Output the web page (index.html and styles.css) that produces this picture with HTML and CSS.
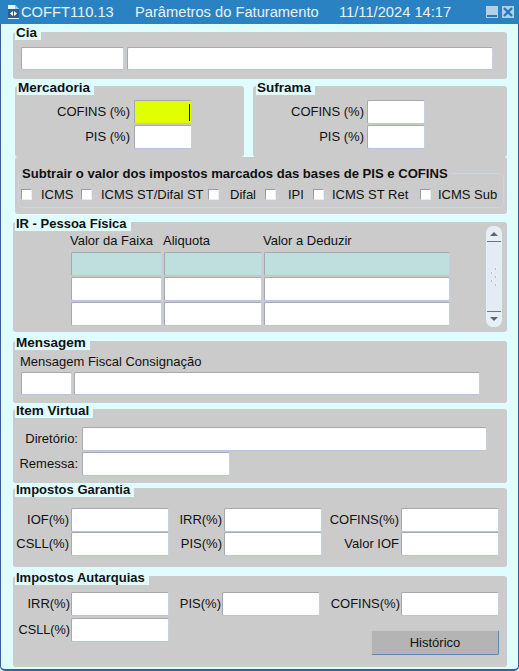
FILE: index.html
```html
<!DOCTYPE html>
<html lang="pt-BR">
<head>
  <meta charset="UTF-8" />
  <title>COFFT110.13</title>
  <link rel="stylesheet" href="styles.css">
</head>
<body>
  <div class="window">
    <!-- Title bar -->
    <div class="titlebar">
      <svg class="app-icon" width="14" height="16" viewBox="0 0 14 16">
        <path d="M2 1h7l4 4v10H2z" fill="#e8f2fa"/>
        <path d="M9 1v4h4" fill="#9cc4e4"/>
        <rect x="2" y="5" width="11" height="9" fill="#2a5f96"/>
        <path d="M7 7v5L4 9.500zM8 7v5l3-2.500z" fill="#fff"/>
      </svg>
      <span class="title-code">COFFT110.13</span>
      <span class="title-name">Parâmetros do Faturamento</span>
      <span class="title-date">11/11/2024 14:17</span>
      <span class="win-btn"><span class="min-mark"></span></span>
      <span class="win-btn">
        <svg width="12" height="12" viewBox="0 0 12 12"><path d="M2 2l8 8M10 2l-8 8" stroke="#2b78b8" stroke-width="2.400"/></svg>
      </span>
    </div>

    <div class="content">
      <!-- Cia -->
      <section class="panel panel-cia">
        <span class="legend">Cia</span>
        <div class="row-cia">
          <input class="field" type="text">
          <input class="field" type="text">
        </div>
      </section>

      <!-- Mercadoria / Suframa -->
      <div class="split">
        <section class="panel panel-merc">
          <span class="legend">Mercadoria</span>
          <div class="form-merc">
            <label>COFINS (%)</label><div class="field field-active"></div>
            <label>PIS (%)</label><input class="field" type="text">
          </div>
        </section>
        <section class="panel panel-sufr">
          <span class="legend">Suframa</span>
          <div class="form-sufr">
            <label>COFINS (%)</label><input class="field" type="text">
            <label>PIS (%)</label><input class="field" type="text">
          </div>
        </section>
      </div>

      <!-- Checkboxes -->
      <section class="panel panel-sub">
        <div class="sub-frame">
          <strong class="sub-title">Subtrair o valor dos impostos marcados das bases de PIS e COFINS</strong>
          <div class="checks">
            <input class="check" type="checkbox"><span class="check-label c1">ICMS</span>
            <input class="check" type="checkbox"><span class="check-label c2">ICMS ST/Difal ST</span>
            <input class="check" type="checkbox"><span class="check-label c3">Difal</span>
            <input class="check" type="checkbox"><span class="check-label c4">IPI</span>
            <input class="check" type="checkbox"><span class="check-label c5">ICMS ST Ret</span>
            <input class="check" type="checkbox"><span class="check-label c6">ICMS Sub</span>
          </div>
        </div>
      </section>

      <!-- IR -->
      <section class="panel panel-ir">
        <span class="legend legend-small">IR - Pessoa Física</span>
        <div class="ir-body">
          <div class="ir-grid">
            <span>Valor da Faixa</span><span>Aliquota</span><span>Valor a Deduzir</span>
            <div class="field field-teal"></div><div class="field field-teal"></div><div class="field field-teal"></div>
            <input class="field" type="text"><input class="field" type="text"><input class="field" type="text">
            <input class="field" type="text"><input class="field" type="text"><input class="field" type="text">
          </div>
          <div class="scrollbar">
            <div class="arrow-box"><span class="arrow-up"></span></div>
            <svg class="grip" width="8" height="22" viewBox="0 0 8 22">
              <path d="M5 3h1M1 7h1M5 11h1M1 15h1M5 19h1" stroke="#8a8f98" stroke-width="1"/>
              <path d="M6 2h1M2 6h1M6 10h1M2 14h1M6 18h1" stroke="#fff" stroke-width="1"/>
            </svg>
            <div class="arrow-box arrow-box-end"><span class="arrow-down"></span></div>
          </div>
        </div>
      </section>

      <!-- Mensagem -->
      <section class="panel panel-msg">
        <span class="legend">Mensagem</span>
        <div class="msg-title">Mensagem Fiscal Consignação</div>
        <div class="row-msg">
          <input class="field" type="text">
          <input class="field" type="text">
        </div>
      </section>

      <!-- Item Virtual -->
      <section class="panel panel-item">
        <span class="legend">Item Virtual</span>
        <div class="form-item">
          <label>Diretório:</label><input class="field" type="text">
          <label>Remessa:</label><input class="field field-short" type="text">
        </div>
      </section>

      <!-- Impostos Garantia -->
      <section class="panel panel-gar">
        <span class="legend legend-small">Impostos Garantia</span>
        <div class="form-tax">
          <label>IOF(%)</label><input class="field" type="text">
          <label>IRR(%)</label><input class="field" type="text">
          <label>COFINS(%)</label><input class="field" type="text">
          <label>CSLL(%)</label><input class="field" type="text">
          <label>PIS(%)</label><input class="field" type="text">
          <label>Valor IOF</label><input class="field" type="text">
        </div>
      </section>

      <!-- Impostos Autarquias -->
      <section class="panel panel-aut">
        <span class="legend legend-small">Impostos Autarquias</span>
        <div class="form-aut">
          <label>IRR(%)</label><input class="field" type="text">
          <label>PIS(%)</label><input class="field" type="text">
          <label>COFINS(%)</label><input class="field" type="text">
          <label class="tight">CSLL(%)</label><input class="field" type="text">
          <button class="btn" type="button">Histórico</button>
        </div>
      </section>
    </div>
  </div>
</body>
</html>
```

FILE: styles.css
```css
/* Base */
html, body {
  margin: 0;
  padding: 0;
  background: #dffcff;
}
body {
  width: 519px;
  height: 671px;
  overflow: hidden;
  font-family: 'Liberation Sans', Arial, sans-serif;
  font-size: 13px;
  color: #111;
}
/* Window frame */
.window {
  box-sizing: border-box;
  width: 519px;
  height: 671px;
  background: #dffcff;
  border-left: 1px solid #3d5f96;
  border-right: 1px solid #3d5f96;
  border-bottom: 2px solid #3d5f96;
  border-radius: 0 0 5px 5px;
}
.titlebar {
  display: flex;
  align-items: center;
  height: 24px;
  margin: 0 -1px;
  padding-left: 6px;
  background: #2b82c3;
  color: #e6f2fa;
  font-size: 14.700px;
}
.app-icon {
  margin-right: 1px;
}
.title-code {
  width: 114px;
}
.title-name {
  width: 204px;
}
.title-date {
  width: 147px;
}
.win-btn {
  display: flex;
  align-items: center;
  justify-content: center;
  width: 12px;
  height: 12px;
  margin-right: 4px;
  background: #b4d0e8;
}
.min-mark {
  width: 10px;
  height: 2px;
  margin-top: 8px;
  background: #2b78b8;
}
.content {
  padding-left: 12px;
  padding-right: 11px;
}
/* Panels */
.panel {
  box-sizing: border-box;
  background: #cbcbcb;
  border-radius: 3px;
}
.legend {
  display: block;
  position: relative;
  top: -5px;
  width: fit-content;
  height: 14px;
  margin-left: 2px;
  padding: 0 4px 0 1px;
  background: #dffcff;
  font-size: 13.500px;
  font-weight: bold;
  line-height: 14px;
}
.legend-small {
  font-size: 13px;
}
.field {
  display: block;
  box-sizing: border-box;
  width: 100%;
  height: 24px;
  margin: 0;
  padding: 0;
  background: #fff;
  border: 1px solid;
  border-color: #a6a8b0 #c4d0e4 #b6c4de #a6a8b0;
  border-radius: 2px;
}
.field-active {
  background: linear-gradient(#111, #111) no-repeat right 1px center / 1px 17px, #e0ff00;
}
.field-teal {
  background: #bfdfde;
}
label {
  text-align: right;
  white-space: nowrap;
  line-height: 24px;
}
/* Cia */
.panel-cia {
  height: 47px;
  margin-top: 8px;
  padding-left: 8px;
}
.panel-cia .legend {
  top: -6px;
  margin-left: -6px;
}
.row-cia {
  display: grid;
  grid-template-columns: 103px 366px;
  gap: 3px;
  margin-top: 1px;
}
.row-cia .field {
  height: 23px;
}
/* Mercadoria and Suframa */
.split {
  display: flex;
  gap: 9px;
  margin-top: 7px;
  margin-left: 2px;
}
.panel-merc,
.panel-sufr {
  height: 71px;
}
.panel-merc {
  width: 229px;
}
.panel-sufr {
  width: 254px;
}
.panel-sufr .legend {
  margin-left: 3px;
}
.form-merc,
.form-sufr {
  display: grid;
  grid-template-rows: 24px 24px;
  row-gap: 1px;
  column-gap: 4px;
}
.form-merc {
  grid-template-columns: 115px 58px;
}
.form-sufr {
  grid-template-columns: 111px 58px;
  column-gap: 3px;
}
/* Checkbox panel */
.panel-sub {
  height: 57px;
  margin-left: 2px;
  padding: 16px 3px 0 3px;
}
.sub-frame {
  box-sizing: border-box;
  height: 35px;
  padding-left: 2px;
  border: 1px solid #c9d6e6;
  border-radius: 5px;
}
.sub-title {
  display: block;
  width: fit-content;
  margin-top: -8px;
  padding-left: 1px;
  padding-right: 3px;
  background: #cbcbcb;
  font-size: 13.100px;
  line-height: 16px;
}
.checks {
  display: flex;
  align-items: center;
  height: 16px;
  margin-top: 4px;
}
.check {
  appearance: none;
  box-sizing: border-box;
  flex: none;
  width: 11px;
  height: 11px;
  margin: 0;
  background: #fff;
  border: 1px solid;
  border-color: #9a9ca4 #e6eef6 #e6eef6 #9a9ca4;
}
.check-label {
  box-sizing: border-box;
  flex: none;
  white-space: nowrap;
}
.c1 { width: 49px; padding-left: 9px; }
.c2 { width: 116px; padding-left: 9px; }
.c3 { width: 46px; padding-left: 11px; }
.c4 { width: 37px; padding-left: 12px; }
.c5 { width: 96px; padding-left: 8px; }
.c6 { padding-left: 7px; }
/* IR table */
.panel-ir {
  height: 110px;
  margin-top: 8px;
}
.ir-body {
  display: flex;
  align-items: flex-start;
  margin-top: -14px;
  padding-left: 58px;
}
.ir-grid {
  display: grid;
  grid-template-columns: 91px 98px 186px;
  grid-template-rows: 21px 24px 24px 24px;
  column-gap: 2px;
  row-gap: 1px;
  padding-top: 8px;
}
.ir-grid span {
  margin-left: -1px;
  line-height: 22px;
  white-space: nowrap;
}
.scrollbar {
  display: flex;
  flex-direction: column;
  align-items: center;
  justify-content: space-between;
  box-sizing: border-box;
  width: 14px;
  height: 99px;
  margin-top: 5px;
  margin-left: 37px;
  background: #e4ebf4;
  border-radius: 6px;
  box-shadow: 0 0 0 1px #dcf4fa;
}
.arrow-box {
  display: flex;
  align-items: center;
  justify-content: center;
  width: 100%;
  height: 14px;
  background: #e8eef6;
  border-bottom: 1px solid #6c7480;
  border-radius: 6px 6px 0 0;
}
.arrow-box-end {
  border-bottom: 0;
  border-top: 1px solid #6c7480;
  border-radius: 0 0 6px 6px;
}
.arrow-up {
  border: 4px solid transparent;
  border-top: 0;
  border-bottom: 4px solid #5c6470;
}
.arrow-down {
  border: 4px solid transparent;
  border-bottom: 0;
  border-top: 4px solid #5c6470;
}
/* Mensagem */
.panel-msg {
  height: 62px;
  margin-top: 9px;
  padding-left: 8px;
}
.panel-msg .legend {
  margin-left: -6px;
}
.msg-title {
  margin-top: -4px;
  margin-left: -1px;
  line-height: 22px;
}
.row-msg {
  display: grid;
  grid-template-columns: 51px 406px;
  gap: 2px;
  margin-top: -1px;
}
.row-msg .field {
  height: 23px;
}
/* Item Virtual */
.panel-item {
  height: 74px;
  margin-top: 6px;
}
.form-item {
  display: grid;
  grid-template-columns: 65px 405px;
  grid-template-rows: 24px 24px;
  column-gap: 4px;
  row-gap: 1px;
  margin-top: 4px;
}
.field-short {
  width: 148px;
}
/* Tax forms */
.panel-gar {
  height: 79px;
  margin-top: 5px;
}
.form-tax {
  display: grid;
  grid-template-columns: 56px 98px 51px 98px 75px 98px;
  grid-template-rows: 24px 24px;
  column-gap: 2px;
  margin-top: 6px;
}
.panel-aut {
  height: 91px;
  margin-top: 9px;
}
.form-aut {
  display: grid;
  grid-template-columns: 57px 98px 51px 98px 79px 98px;
  grid-template-rows: 24px 24px 11px;
  column-gap: 1px;
  row-gap: 2px;
  margin-top: 2px;
}
.form-aut .tight {
  font-size: 12.700px;
}
.btn {
  grid-column: 5 / 7;
  grid-row: 2 / 4;
  justify-self: end;
  align-self: end;
  width: 128px;
  height: 25px;
  padding: 0;
  background: #b4b4b4;
  border: 1px solid;
  border-color: #c8c8c8 #5f86a8 #5f86a8 #c8c8c8;
  border-radius: 2px;
  font-family: inherit;
  font-size: 13px;
  color: #111;
}
```
